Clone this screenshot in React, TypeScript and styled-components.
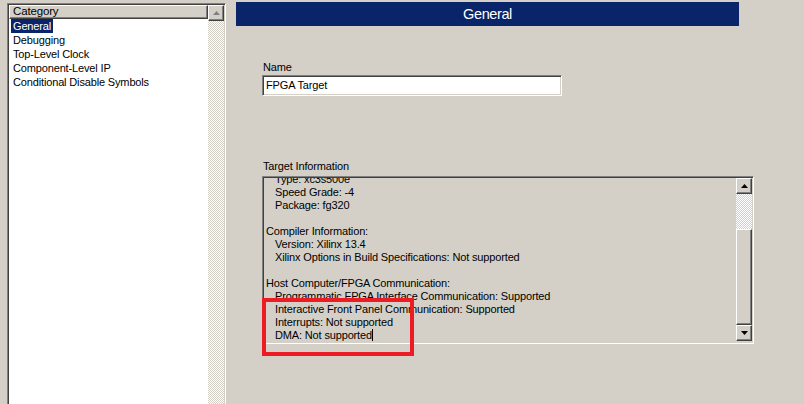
import React from "react";
import styled, { createGlobalStyle } from "styled-components";

const Global = createGlobalStyle`
  html, body { margin: 0; padding: 0; overflow: hidden; }
  body {
    background: #d4d0c8;
    font-family: "Liberation Sans", Arial, sans-serif;
    font-size: 11px;
    color: #000;
  }
`;

const Page = styled.div`
  position: relative;
  display: flex;
  align-items: flex-start;
  width: 804px;
  height: 404px;
  overflow: hidden;
`;

const Sunken = `
  border-style: solid;
  border-width: 1px;
  border-color: #808080 #ffffff #ffffff #808080;
  box-shadow: inset 1px 1px 0 #404040, inset -1px -1px 0 #d4d0c8;
`;

const Raised = `
  background: #d4d0c8;
  border-style: solid;
  border-width: 1px;
  border-color: #ffffff #404040 #404040 #ffffff;
  box-shadow: inset -1px -1px 0 #808080;
  box-sizing: border-box;
`;

const CategoryPanel = styled.div`
  margin: 3px 0 0 7px;
  width: 219px;
  height: 420px;
  box-sizing: border-box;
  ${Sunken}
  padding: 1px;
  display: grid;
  grid-template-columns: 1fr 16px;
  background: #fff;
`;

const ListColumn = styled.div`
  display: flex;
  flex-direction: column;
  background: #fff;
  letter-spacing: -0.15px;
`;

const ColumnHeader = styled.div`
  ${Raised}
  height: 14px;
  line-height: 11px;
  padding-left: 3px;
  font-size: 11.5px;
`;

const ItemRow = styled.div`
  height: 14px;
  line-height: 14px;
  padding-left: 2px;
`;

const ItemText = styled.span<{ $selected?: boolean }>`
  display: inline-block;
  padding: 0 2px;
  line-height: 14px;
  background: ${(p) => (p.$selected ? "#0a246a" : "transparent")};
  color: ${(p) => (p.$selected ? "#fff" : "#000")};
`;

const VScroll = styled.div`
  display: flex;
  flex-direction: column;
  background: repeating-conic-gradient(#d4d0c8 0 25%, #ffffff 0 50%) 0 0 / 2px 2px;
`;

const ScrollButton = styled.div`
  ${Raised}
  width: 16px;
  height: 16px;
  flex: none;
  display: flex;
  align-items: center;
  justify-content: center;
`;

const Track = styled.div<{ $h?: number }>`
  flex: ${(p) => (p.$h ? "none" : "1")};
  height: ${(p) => (p.$h ? `${p.$h}px` : "auto")};
`;

const Thumb = styled.div`
  ${Raised}
  flex: 1;
`;

const Arrow = ({ down, color }: { down?: boolean; color: string }) => (
  <svg width="7" height="4" viewBox="0 0 7 4">
    {down ? (
      <path d="M0 0H7L3.5 4Z" fill={color} />
    ) : (
      <path d="M0 4H7L3.5 0Z" fill={color} />
    )}
  </svg>
);

const Main = styled.div`
  margin-left: 10px;
  display: flex;
  flex-direction: column;
`;

const TitleBar = styled.div`
  margin-top: 2px;
  width: 503px;
  height: 24px;
  background: #0a246a;
  color: #fff;
  font-size: 14.5px;
  letter-spacing: -0.4px;
  display: flex;
  align-items: center;
  justify-content: center;
`;

const Form = styled.div`
  padding-left: 26px;
  display: flex;
  flex-direction: column;
  letter-spacing: -0.15px;
`;

const FieldLabel = styled.div<{ $top: number }>`
  margin-top: ${(p) => p.$top}px;
  height: 13px;
  line-height: 13px;
  padding-left: 1px;
`;

const NameInput = styled.div`
  margin-top: 1px;
  width: 300px;
  height: 21px;
  box-sizing: border-box;
  ${Sunken}
  background: #fff;
  padding-left: 3px;
  line-height: 19px;
`;

const InfoBox = styled.div`
  margin-top: 3px;
  width: 492px;
  height: 168px;
  box-sizing: border-box;
  ${Sunken}
  padding: 1px;
  display: flex;
  background: #d4d0c8;
`;

const InfoText = styled.div`
  flex: 1;
  overflow: hidden;
  padding-left: 2px;
`;

const InfoLines = styled.div`
  margin-top: -5px;
`;

const Line = styled.div<{ $indent?: boolean }>`
  height: 13px;
  line-height: 13px;
  white-space: pre;
  padding-left: ${(p) => (p.$indent ? "9px" : "0")};
`;

const InfoScroll = styled.div`
  width: 16px;
  display: flex;
  flex-direction: column;
  background: repeating-conic-gradient(#d4d0c8 0 25%, #ffffff 0 50%) 0 0 / 2px 2px;
  margin-bottom: 1px;
`;

const Caret = styled.span`
  display: inline-block;
  width: 1px;
  height: 12px;
  background: #000;
  vertical-align: -2px;
`;

const Highlight = styled.div`
  position: absolute;
  left: 262px;
  top: 298px;
  width: 152px;
  height: 58px;
  box-sizing: border-box;
  border: 4px solid #ed1c24;
`;

const categories = [
  "General",
  "Debugging",
  "Top-Level Clock",
  "Component-Level IP",
  "Conditional Disable Symbols",
];

const info: { t: string; i?: boolean }[] = [
  { t: "Type: xc3s500e", i: true },
  { t: "Speed Grade: -4", i: true },
  { t: "Package: fg320", i: true },
  { t: "" },
  { t: "Compiler Information:" },
  { t: "Version: Xilinx 13.4", i: true },
  { t: "Xilinx Options in Build Specifications: Not supported", i: true },
  { t: "" },
  { t: "Host Computer/FPGA Communication:" },
  { t: "Programmatic FPGA Interface Communication: Supported", i: true },
  { t: "Interactive Front Panel Communication: Supported", i: true },
  { t: "Interrupts: Not supported", i: true },
];

export default function App() {
  return (
    <>
      <Global />
      <Page>
        <CategoryPanel>
          <ListColumn>
            <ColumnHeader>Category</ColumnHeader>
            {categories.map((c, idx) => (
              <ItemRow key={c}>
                <ItemText $selected={idx === 0}>{c}</ItemText>
              </ItemRow>
            ))}
          </ListColumn>
          <VScroll>
            <ScrollButton>
              <Arrow color="#808080" />
            </ScrollButton>
            <Track />
          </VScroll>
        </CategoryPanel>
        <Main>
          <TitleBar>General</TitleBar>
          <Form>
            <FieldLabel $top={35}>Name</FieldLabel>
            <NameInput>FPGA Target</NameInput>
            <FieldLabel $top={64}>Target Information</FieldLabel>
            <InfoBox>
              <InfoText>
                <InfoLines>
                  {info.map((l, idx) => (
                    <Line key={idx} $indent={l.i}>
                      {l.t}
                    </Line>
                  ))}
                  <Line $indent>
                    DMA: Not supported
                    <Caret />
                  </Line>
                </InfoLines>
              </InfoText>
              <InfoScroll>
                <ScrollButton>
                  <Arrow color="#000" />
                </ScrollButton>
                <Track $h={35} />
                <Thumb />
                <ScrollButton>
                  <Arrow down color="#000" />
                </ScrollButton>
              </InfoScroll>
            </InfoBox>
          </Form>
        </Main>
        <Highlight />
      </Page>
    </>
  );
}
